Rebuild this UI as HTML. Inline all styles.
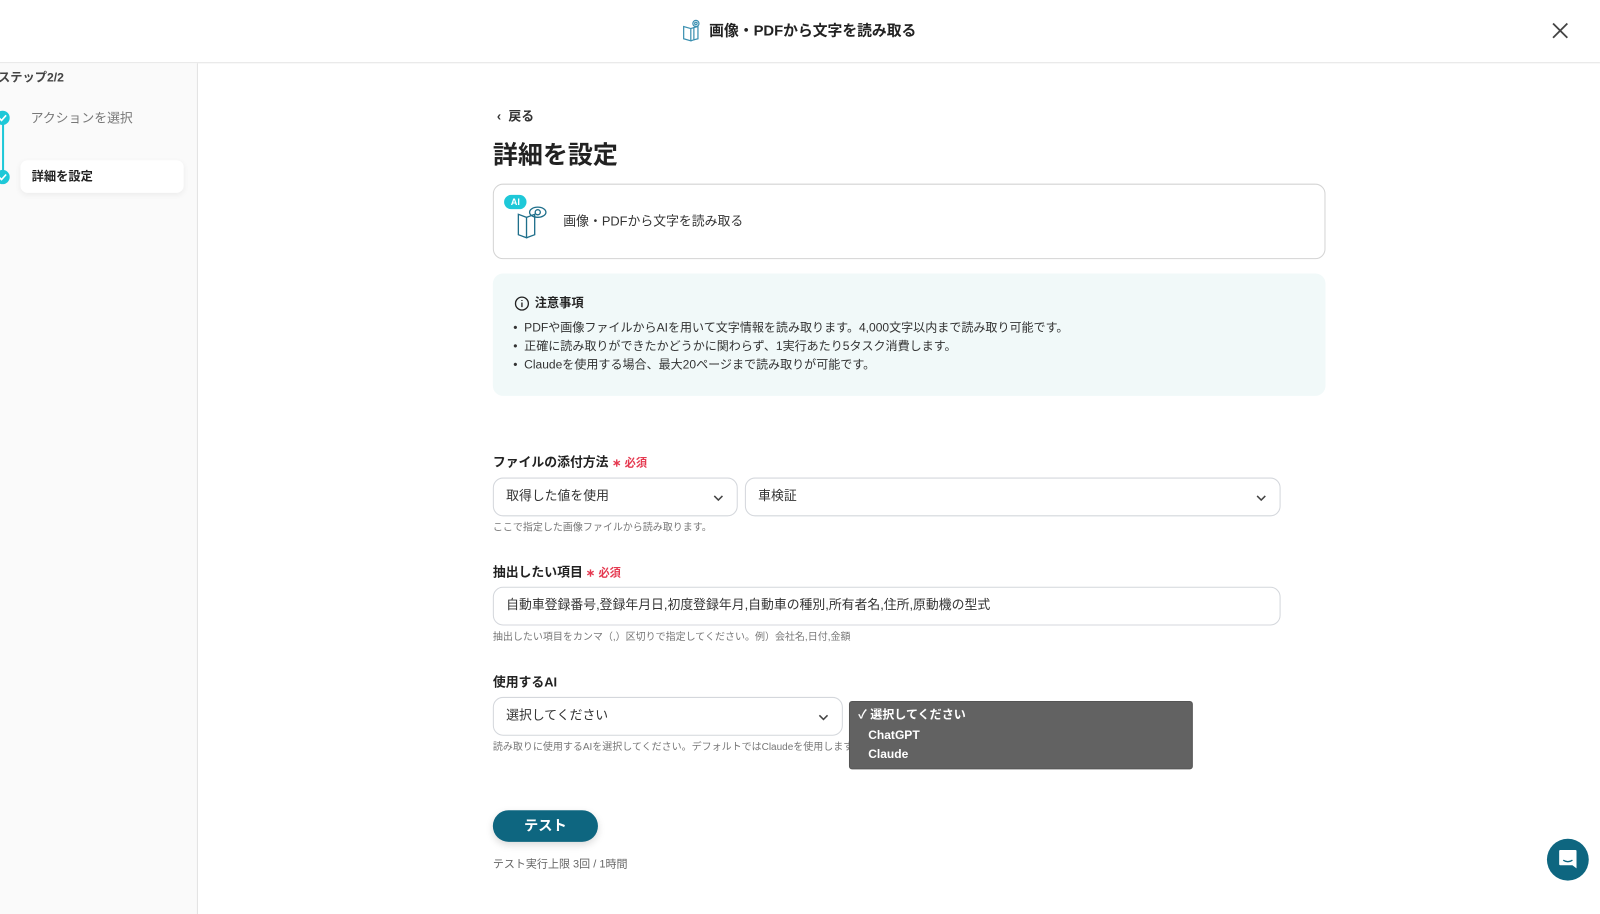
<!DOCTYPE html>
<html><head><meta charset="utf-8"><style>
*{box-sizing:border-box;margin:0;padding:0}
body{width:1600px;height:896px;overflow:hidden;background:#fff;font-family:"Liberation Sans","Noto Sans CJK JP",sans-serif;color:#222;position:relative}
#w{position:absolute;left:0;top:0;width:1568px;height:878px;transform:scale(1.0204);transform-origin:0 0}
.abs{position:absolute}
.hdr{left:0;top:0;width:1568px;height:62px;border-bottom:1px solid #e4e4e4}
.side{left:0;top:62px;width:194px;height:834px;background:#fafafa;border-right:1px solid #e4e4e4}
.sel{border:1px solid #d4d7dc;border-radius:10px;background:#fff;height:38px;font-size:12.6px;color:#333;padding:0 12px;line-height:35px}
.chev{position:absolute;right:12px;top:13px}
.help{font-size:9.8px;color:#777}
.lbl{font-size:12.6px;font-weight:bold;color:#222}
.req{color:#e53950;font-size:11px;font-weight:bold}
</style></head><body><div id="w">
<div class="abs hdr"></div>
<svg class="abs" style="left:668px;top:19px" width="20" height="22" viewBox="0 0 20 22" fill="none" stroke="#3a8fb0" stroke-width="1.2"><path d="M2 7v12l7 2v-12z"/><path d="M9 9l3-1v12l-3 1"/><path d="M12 8l4-1v12l-4 1"/><circle cx="14" cy="4" r="3"/><circle cx="14" cy="4" r="1.2"/></svg>
<div class="abs" style="left:695px;top:19px;font-size:14.5px;font-weight:bold;color:#222">画像・PDFから文字を読み取る</div>
<svg class="abs" style="left:1520px;top:21px" width="18" height="18" viewBox="0 0 18 18" stroke="#444" stroke-width="1.8"><path d="M2 2L16 16M16 2L2 16"/></svg>
<div class="abs side"></div>
<div class="abs" style="left:-2px;top:67px;font-size:12px;font-weight:bold;color:#444">ステップ2/2</div>
<div class="abs" style="left:2px;top:115px;width:2px;height:58px;background:#1ec8d8"></div>
<svg class="abs" style="left:-5px;top:108px" width="15" height="15" viewBox="0 0 15 15"><circle cx="7.5" cy="7.5" r="7" fill="#1ec8d8"/><path d="M4 7.5l2.5 2.5 4.5-5" stroke="#fff" stroke-width="1.6" fill="none"/></svg>
<svg class="abs" style="left:-5px;top:166px" width="15" height="15" viewBox="0 0 15 15"><circle cx="7.5" cy="7.5" r="7" fill="#1ec8d8"/><path d="M4 7.5l2.5 2.5 4.5-5" stroke="#fff" stroke-width="1.6" fill="none"/></svg>
<div class="abs" style="left:30px;top:105px;font-size:12.6px;color:#777">アクションを選択</div>
<div class="abs" style="left:20px;top:157px;width:160px;height:32px;background:#fff;border-radius:7px;box-shadow:0 2px 6px rgba(0,0,0,.06)"></div>
<div class="abs" style="left:31px;top:164px;font-size:12px;font-weight:bold;color:#222">詳細を設定</div>

<div class="abs" style="left:487px;top:103px;font-size:12.6px;font-weight:bold;color:#333">‹&nbsp; 戻る</div>
<div class="abs" style="left:483px;top:133px;font-size:24.5px;font-weight:bold;color:#222">詳細を設定</div>
<div class="abs" style="left:483px;top:180px;width:816px;height:74px;border:1px solid #d4d4d4;border-radius:10px"></div>
<div class="abs" style="left:494px;top:191px;width:22px;height:14px;border-radius:7px;background:#1ec8d8;color:#fff;font-size:9px;font-weight:bold;text-align:center;line-height:14px">AI</div>
<svg class="abs" style="left:506px;top:200px" width="32" height="34" viewBox="0 0 32 34" fill="none" stroke="#1f6f8b" stroke-width="1.3"><path d="M2 10v20l8 3V13z"/><path d="M10 13l8-3v20l-8 3"/><ellipse cx="21" cy="8" rx="8" ry="5"/><circle cx="21" cy="8" r="2.5"/></svg>
<div class="abs" style="left:552px;top:206px;font-size:12.6px;color:#333">画像・PDFから文字を読み取る</div>
<div class="abs" style="left:483px;top:268px;width:816px;height:120px;background:#f1f9f9;border-radius:10px"></div>
<svg class="abs" style="left:504px;top:290px" width="15" height="15" viewBox="0 0 15 15" fill="none" stroke="#222" stroke-width="1.3"><circle cx="7.5" cy="7.5" r="6.3"/><path d="M7.5 6.5v4.5M7.5 4v1"/></svg>
<div class="abs" style="left:524px;top:288px;font-size:12px;font-weight:bold">注意事項</div>
<div class="abs" style="left:503px;top:312px;font-size:11.8px;line-height:18px;color:#333">•&nbsp; PDFや画像ファイルからAIを用いて文字情報を読み取ります。4,000文字以内まで読み取り可能です。<br>•&nbsp; 正確に読み取りができたかどうかに関わらず、1実行あたり5タスク消費します。<br>•&nbsp; Claudeを使用する場合、最大20ページまで読み取りが可能です。</div>

<div class="abs lbl" style="left:483px;top:442px">ファイルの添付方法 <span class="req">∗ 必須</span></div>
<div class="abs sel" style="left:483px;top:468px;width:240px">取得した値を使用<svg class="chev" width="12" height="12" viewBox="0 0 12 12" fill="none" stroke="#444" stroke-width="1.5"><path d="M2 4l4 4 4-4"/></svg></div>
<div class="abs sel" style="left:730px;top:468px;width:525px">車検証<svg class="chev" width="12" height="12" viewBox="0 0 12 12" fill="none" stroke="#444" stroke-width="1.5"><path d="M2 4l4 4 4-4"/></svg></div>
<div class="abs help" style="left:483px;top:509px">ここで指定した画像ファイルから読み取ります。</div>
<div class="abs lbl" style="left:483px;top:550px">抽出したい項目<span class="req"> ∗ 必須</span></div>
<div class="abs sel" style="left:483px;top:575px;width:772px">自動車登録番号,登録年月日,初度登録年月,自動車の種別,所有者名,住所,原動機の型式</div>
<div class="abs help" style="left:483px;top:616px">抽出したい項目をカンマ（,）区切りで指定してください。例）会社名,日付,金額</div>
<div class="abs lbl" style="left:483px;top:658px">使用するAI</div>
<div class="abs sel" style="left:483px;top:683px;width:343px">選択してください<svg class="chev" width="12" height="12" viewBox="0 0 12 12" fill="none" stroke="#444" stroke-width="1.5"><path d="M2 4l4 4 4-4"/></svg></div>
<div class="abs help" style="left:483px;top:724px">読み取りに使用するAIを選択してください。デフォルトではClaudeを使用します</div>
<div class="abs" style="left:832px;top:687px;width:337px;height:67px;background:#626262;border:1px solid #555;border-radius:3px;color:#fff;font-size:11.8px;font-weight:bold;line-height:19.5px;padding:3px 0 0 8px">✓ 選択してください<br>&nbsp;&nbsp;&nbsp;ChatGPT<br>&nbsp;&nbsp;&nbsp;Claude</div>
<div class="abs" style="left:483px;top:794px;width:103px;height:31px;border-radius:16px;background:#0e6680;color:#fff;font-size:14px;font-weight:bold;text-align:center;line-height:30px;box-shadow:0 3px 8px rgba(0,0,0,.15)">テスト</div>
<div class="abs" style="left:483px;top:838px;font-size:10.8px;color:#666">テスト実行上限 3回 / 1時間</div>
<div class="abs" style="left:1516px;top:822px;width:41px;height:41px;border-radius:50%;background:#0e6680"></div>
<svg class="abs" style="left:1526px;top:831px" width="21" height="22" viewBox="0 0 21 22"><path d="M3 2h15a1 1 0 0 1 1 1v17l-4-3H3a1 1 0 0 1-1-1V3a1 1 0 0 1 1-1z" fill="#fff"/><path d="M6 12q4.5 3 9 0" stroke="#0e6680" stroke-width="1.3" fill="none"/></svg>
</div></body></html>
